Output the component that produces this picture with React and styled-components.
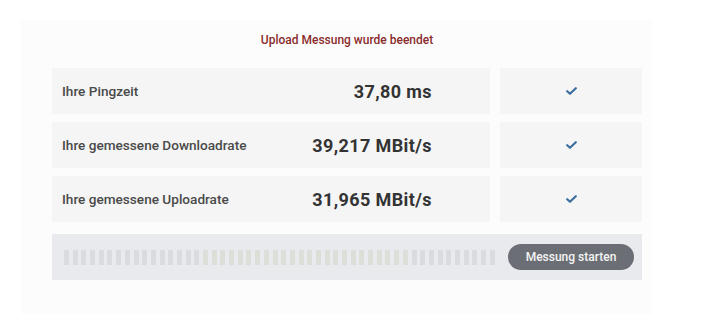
import React from 'react';
import styled, { createGlobalStyle } from 'styled-components';

const GlobalStyle = createGlobalStyle`
  html, body {
    margin: 0;
    padding: 0;
    background: #ffffff;
  }
  body {
    font-family: Roboto, "Noto Sans", "DejaVu Sans", sans-serif;
  }
`;

const Card = styled.div`
  width: 590px;
  margin: 20px 0 0 21px;
  padding: 13px 10px 34px 31px;
  background: #fcfcfc;
`;

const Title = styled.div`
  text-align: center;
  font-size: 12px;
  font-weight: 500;
  line-height: 14px;
  color: #8a2c2c;
  margin-bottom: 21px;
`;

const Grid = styled.div`
  display: grid;
  grid-template-columns: 438px 142px;
  column-gap: 10px;
  row-gap: 8px;
`;

const Cell = styled.div`
  height: 46px;
  background: #f5f5f5;
  display: flex;
  align-items: center;
  justify-content: ${({ center }) => (center ? 'center' : 'flex-start')};
  padding: ${({ center }) => (center ? '0' : '0 58px 0 10px')};
`;

const Label = styled.span`
  flex: 1;
  font-size: 13.6px;
  font-weight: 500;
  color: #4a4a4a;
`;

const Value = styled.span`
  font-size: 18px;
  font-weight: 700;
  letter-spacing: 0.4px;
  color: #333333;
  text-align: right;
`;

const ProgressBar = styled.div`
  margin-top: 12px;
  height: 46px;
  background: #e9eaed;
  display: flex;
  align-items: center;
  padding: 0 8px 0 12px;
`;

const Segments = styled.div`
  flex: 1;
  display: flex;
  gap: 3.7px;
  align-items: center;
`;

const Segment = styled.span`
  width: 5px;
  height: 15px;
  background: ${({ tint }) => tint};
`;

const StartButton = styled.button`
  margin-left: 10px;
  width: 126px;
  height: 26px;
  border: none;
  border-radius: 13px;
  background: #6b6f75;
  color: #f4f4f4;
  font-family: inherit;
  font-size: 12px;
  font-weight: 500;
  cursor: pointer;
`;

const rows = [
  { label: 'Ihre Pingzeit', value: '37,80 ms' },
  { label: 'Ihre gemessene Downloadrate', value: '39,217 MBit/s' },
  { label: 'Ihre gemessene Uploadrate', value: '31,965 MBit/s' },
];

function Check() {
  return (
    <svg width="11" height="8" viewBox="0 0 11 8">
      <path d="M1.2 4.2 L4 6.8 L9.8 1.2" fill="none" stroke="#3f6f9f" strokeWidth="2.2" strokeLinecap="round" strokeLinejoin="round" />
    </svg>
  );
}

export default function App() {
  const segments = Array.from({ length: 50 }, (_, i) => {
    const mid = i > 15 && i < 40;
    return mid ? '#dae0d8' : '#d9dcde';
  });

  return (
    <>
      <GlobalStyle />
      <Card>
        <Title>Upload Messung wurde beendet</Title>
        <Grid>
          {rows.map((r) => (
            <React.Fragment key={r.label}>
              <Cell>
                <Label>{r.label}</Label>
                <Value>{r.value}</Value>
              </Cell>
              <Cell center>
                <Check />
              </Cell>
            </React.Fragment>
          ))}
        </Grid>
        <ProgressBar>
          <Segments>
            {segments.map((c, i) => (
              <Segment key={i} tint={c} />
            ))}
          </Segments>
          <StartButton>Messung starten</StartButton>
        </ProgressBar>
      </Card>
    </>
  );
}
